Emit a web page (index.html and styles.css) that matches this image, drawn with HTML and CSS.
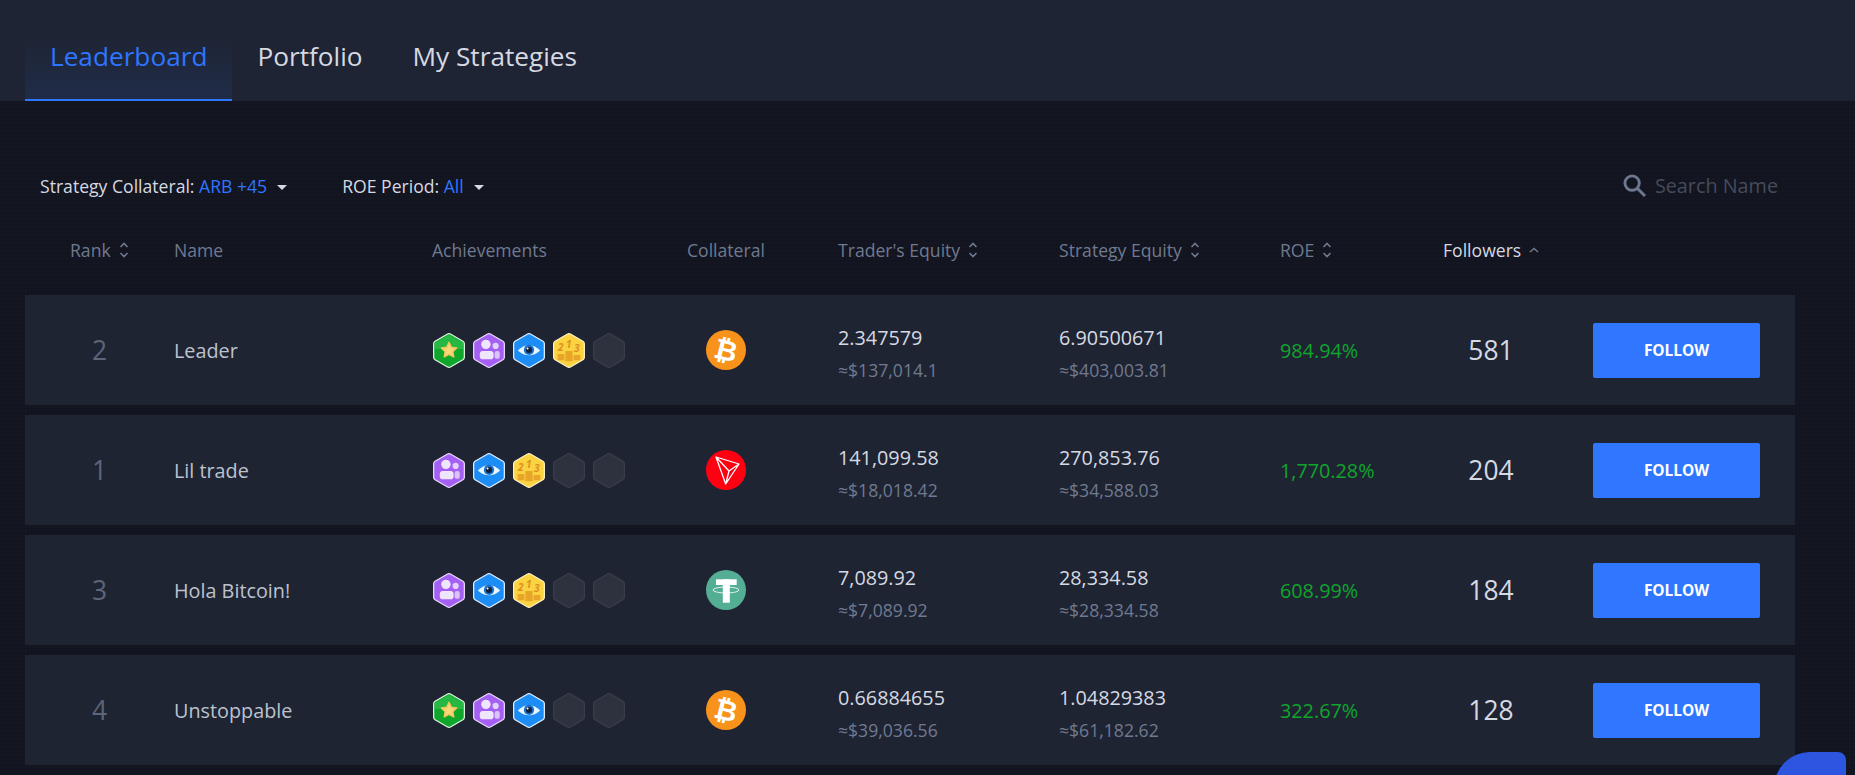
FILE: index.html
```html
<!DOCTYPE html>
<html lang="en">
<head>
<meta charset="utf-8">
<title>Leaderboard</title>
<link rel="stylesheet" href="styles.css">
</head>
<body>
<svg class="defs" width="0" height="0" aria-hidden="true">
  <symbol id="b-star" viewBox="0.4 0.4 31.2 34.2">
    <path fill="#0ea62b" stroke="#dff5e2" stroke-width="1.2" d="M14.6 1.4 Q16 .6 17.4 1.4 L29.6 8.4 Q31 9.2 31 10.8 V24.2 Q31 25.8 29.6 26.6 L17.4 33.6 Q16 34.4 14.6 33.6 L2.4 26.6 Q1 25.8 1 24.2 V10.8 Q1 9.2 2.4 8.4 Z"/>
    <path fill="#3cc457" opacity=".55" d="M16 2.2 L30 10 V16 H2 V10 Z"/>
    <path fill="#f7d77a" stroke="#f4c65a" stroke-width="1.4" stroke-linejoin="round" d="M16 9.5 L18.3 14.3 L23.5 15 L19.7 18.6 L20.7 23.8 L16 21.3 L11.3 23.8 L12.3 18.6 L8.5 15 L13.7 14.3 Z"/>
  </symbol>
  <symbol id="b-people" viewBox="0.4 0.4 31.2 34.2">
    <path fill="#a55ff2" stroke="#e9dcfd" stroke-width="1.2" d="M14.6 1.4 Q16 .6 17.4 1.4 L29.6 8.4 Q31 9.2 31 10.8 V24.2 Q31 25.8 29.6 26.6 L17.4 33.6 Q16 34.4 14.6 33.6 L2.4 26.6 Q1 25.8 1 24.2 V10.8 Q1 9.2 2.4 8.4 Z"/>
    <circle cx="13" cy="11.5" r="4.6" fill="#efe6fd"/>
    <circle cx="22.5" cy="13" r="3" fill="#e3d2fb"/>
    <rect x="7" y="18" width="13.5" height="8" rx="3" fill="#efe6fd"/>
    <rect x="21.5" y="18" width="5" height="7.5" rx="2" fill="#d9c3f9"/>
  </symbol>
  <symbol id="b-eye" viewBox="0.4 0.4 31.2 34.2">
    <path fill="#1d8df6" stroke="#e1f0ff" stroke-width="1.2" d="M14.6 1.4 Q16 .6 17.4 1.4 L29.6 8.4 Q31 9.2 31 10.8 V24.2 Q31 25.8 29.6 26.6 L17.4 33.6 Q16 34.4 14.6 33.6 L2.4 26.6 Q1 25.8 1 24.2 V10.8 Q1 9.2 2.4 8.4 Z"/>
    <path fill="#e9f5ff" d="M5 17.5 Q16 7 27 17.5 Q16 27 5 17.5 Z"/>
    <circle cx="16" cy="17" r="5" fill="#1b6fc9"/>
    <circle cx="16" cy="17" r="3" fill="#10203f"/>
    <circle cx="14.6" cy="15.6" r="1" fill="#fff"/>
  </symbol>
  <symbol id="b-podium" viewBox="0.4 0.4 31.2 34.2">
    <path fill="#fbd23f" stroke="#fff3c4" stroke-width="1.2" d="M14.6 1.4 Q16 .6 17.4 1.4 L29.6 8.4 Q31 9.2 31 10.8 V24.2 Q31 25.8 29.6 26.6 L17.4 33.6 Q16 34.4 14.6 33.6 L2.4 26.6 Q1 25.8 1 24.2 V10.8 Q1 9.2 2.4 8.4 Z"/>
    <path fill="#e9a52a" d="M5 21 H11.5 V27 H5 Z M12.5 18 H19.5 V28 H12.5 Z M20.5 22 H27 V27 H20.5 Z"/>
  </symbol>
  <symbol id="b-empty" viewBox="0.4 0.4 31.2 34.2">
    <path fill="#2e323f" stroke="#3a3e4b" stroke-width="1.2" d="M14.6 1.4 Q16 .6 17.4 1.4 L29.6 8.4 Q31 9.2 31 10.8 V24.2 Q31 25.8 29.6 26.6 L17.4 33.6 Q16 34.4 14.6 33.6 L2.4 26.6 Q1 25.8 1 24.2 V10.8 Q1 9.2 2.4 8.4 Z"/>
  </symbol>
  <symbol id="c-trx" viewBox="0 0 40 40">
    <circle cx="20" cy="20" r="20" fill="#ff0013"/>
    <path fill="none" stroke="#fff" stroke-width="1.3" stroke-linejoin="round" d="M10 7 L33 14 L19.7 34 Z M10 7 L23 21 L33 14 M23 21 L19.7 34"/>
  </symbol>
  <symbol id="c-usdt" viewBox="0 0 40 40">
    <circle cx="20" cy="20" r="20" fill="#53ae94"/>
    <rect x="10" y="9.3" width="20.7" height="5.7" fill="#fff"/>
    <rect x="16.8" y="9.3" width="7" height="23.4" fill="#fff"/>
    <ellipse cx="20" cy="20" rx="13" ry="3" fill="none" stroke="#fff" stroke-width=".8"/>
  </symbol>
  <symbol id="sort" viewBox="0 0 10 18">
    <path fill="none" stroke="currentColor" stroke-width="1.6" d="M1.5 6 L5 2.5 L8.5 6 M1.5 12 L5 15.5 L8.5 12"/>
  </symbol>
</svg>

<nav class="tabs">
  <a class="tab tab-active">Leaderboard</a>
  <a class="tab">Portfolio</a>
  <a class="tab">My Strategies</a>
</nav>

<main class="board">
  <div class="filters">
    <div class="filter filter-first">Strategy Collateral: <span class="accent">ARB +45</span><i class="caret"></i></div>
    <div class="filter">ROE Period: <span class="accent">All</span><i class="caret"></i></div>
    <div class="search">
      <svg class="search-icon" viewBox="0 0 24 24"><circle cx="9.5" cy="9.5" r="7.5" fill="none" stroke="currentColor" stroke-width="3"/><path d="M15 15 L23 23" stroke="currentColor" stroke-width="3"/></svg>
      <span>Search Name</span>
    </div>
  </div>

  <div class="cols head">
    <div class="head-rank">Rank <svg class="sort-icon"><use href="#sort"/></svg></div>
    <div>Name</div>
    <div>Achievements</div>
    <div>Collateral</div>
    <div>Trader's Equity <svg class="sort-icon"><use href="#sort"/></svg></div>
    <div>Strategy Equity <svg class="sort-icon"><use href="#sort"/></svg></div>
    <div>ROE <svg class="sort-icon"><use href="#sort"/></svg></div>
    <div class="head-active">Followers <svg class="up-icon" viewBox="0 0 10 6"><path fill="none" stroke="currentColor" stroke-width="1.5" d="M1 5 L5 1.5 L9 5"/></svg></div>
    <div></div>
  </div>

  <div class="cols row">
    <div class="rank">2</div>
    <div class="name">Leader</div>
    <div class="badges">
      <svg class="badge"><use href="#b-star"/></svg><svg class="badge"><use href="#b-people"/></svg><svg class="badge"><use href="#b-eye"/></svg>
      <svg class="badge" viewBox="0 0 32 35"><use href="#b-podium" width="32" height="35"/><text class="pod" x="5" y="18">2</text><text class="pod" x="13" y="15">1</text><text class="pod" x="21" y="19">3</text></svg>
      <svg class="badge"><use href="#b-empty"/></svg>
    </div>
    <div class="coin-cell"><svg class="coin" viewBox="0 0 40 40"><circle cx="20" cy="20" r="20" fill="#f7931a"/><text class="btc" x="20" y="30" transform="rotate(14 20 20)">₿</text></svg></div>
    <div class="val"><div>2.347579</div><div class="sub">≈$137,014.1</div></div>
    <div class="val"><div>6.90500671</div><div class="sub">≈$403,003.81</div></div>
    <div class="roe">984.94%</div>
    <div class="followers">581</div>
    <button class="follow">FOLLOW</button>
  </div>

  <div class="cols row">
    <div class="rank">1</div>
    <div class="name">Lil trade</div>
    <div class="badges">
      <svg class="badge"><use href="#b-people"/></svg><svg class="badge"><use href="#b-eye"/></svg>
      <svg class="badge" viewBox="0 0 32 35"><use href="#b-podium" width="32" height="35"/><text class="pod" x="5" y="18">2</text><text class="pod" x="13" y="15">1</text><text class="pod" x="21" y="19">3</text></svg>
      <svg class="badge"><use href="#b-empty"/></svg><svg class="badge"><use href="#b-empty"/></svg>
    </div>
    <div class="coin-cell"><svg class="coin"><use href="#c-trx"/></svg></div>
    <div class="val"><div>141,099.58</div><div class="sub">≈$18,018.42</div></div>
    <div class="val"><div>270,853.76</div><div class="sub">≈$34,588.03</div></div>
    <div class="roe">1,770.28%</div>
    <div class="followers">204</div>
    <button class="follow">FOLLOW</button>
  </div>

  <div class="cols row">
    <div class="rank">3</div>
    <div class="name">Hola Bitcoin!</div>
    <div class="badges">
      <svg class="badge"><use href="#b-people"/></svg><svg class="badge"><use href="#b-eye"/></svg>
      <svg class="badge" viewBox="0 0 32 35"><use href="#b-podium" width="32" height="35"/><text class="pod" x="5" y="18">2</text><text class="pod" x="13" y="15">1</text><text class="pod" x="21" y="19">3</text></svg>
      <svg class="badge"><use href="#b-empty"/></svg><svg class="badge"><use href="#b-empty"/></svg>
    </div>
    <div class="coin-cell"><svg class="coin"><use href="#c-usdt"/></svg></div>
    <div class="val"><div>7,089.92</div><div class="sub">≈$7,089.92</div></div>
    <div class="val"><div>28,334.58</div><div class="sub">≈$28,334.58</div></div>
    <div class="roe">608.99%</div>
    <div class="followers">184</div>
    <button class="follow">FOLLOW</button>
  </div>

  <div class="cols row">
    <div class="rank">4</div>
    <div class="name">Unstoppable</div>
    <div class="badges">
      <svg class="badge"><use href="#b-star"/></svg><svg class="badge"><use href="#b-people"/></svg><svg class="badge"><use href="#b-eye"/></svg><svg class="badge"><use href="#b-empty"/></svg><svg class="badge"><use href="#b-empty"/></svg>
    </div>
    <div class="coin-cell"><svg class="coin" viewBox="0 0 40 40"><circle cx="20" cy="20" r="20" fill="#f7931a"/><text class="btc" x="20" y="30" transform="rotate(14 20 20)">₿</text></svg></div>
    <div class="val"><div>0.66884655</div><div class="sub">≈$39,036.56</div></div>
    <div class="val"><div>1.04829383</div><div class="sub">≈$61,182.62</div></div>
    <div class="roe">322.67%</div>
    <div class="followers">128</div>
    <button class="follow">FOLLOW</button>
  </div>
</main>

<div class="chat-bubble"></div>
</body>
</html>
```

FILE: styles.css
```css
* { box-sizing: border-box; }

html, body {
  margin: 0;
  height: 775px;
  overflow: hidden;
}

body {
  background: #12141f;
  font-family: "Open Sans", "Noto Sans", sans-serif;
  font-size: 17.6px;
  color: #d5d9e2;
}

.defs { position: absolute; }

.tabs {
  display: flex;
  height: 101px;
  padding: 0 25px;
  background: #1e2434;
}

.tab {
  display: flex;
  align-items: center;
  padding: 11px 25px 0;
  font-size: 26.2px;
  color: #d5d9e2;
}

.tab-active {
  color: #2f75ff;
  box-shadow: inset 0 -2px 0 #2f75ff;
  background: linear-gradient(to bottom, rgba(47, 117, 255, 0) 35%, rgba(47, 117, 255, 0.1) 100%);
}

.board {
  height: 674px;
  padding: 63px 25px 0;
  background-color: #12141f;
  background-image: radial-gradient(rgba(255, 255, 255, 0.01) 0.7px, transparent 0.8px);
  background-size: 4px 4px;
}

.filters {
  display: flex;
  align-items: center;
  height: 44px;
  padding: 0 52px 0 15px;
}

.filter { display: flex; align-items: center; white-space: pre; }
.filter-first { margin-right: 55px; }

.accent { color: #2f75ff; }

.caret {
  width: 0;
  height: 0;
  margin-left: 10px;
  margin-top: 3px;
  border-left: 5px solid transparent;
  border-right: 5px solid transparent;
  border-top: 5px solid #d5d9e2;
}

.search {
  display: flex;
  align-items: center;
  gap: 9px;
  margin-left: auto;
  margin-top: -2px;
  font-size: 19.8px;
  color: #454b5c;
}

.search-icon { width: 23px; height: 23px; color: #6d7890; }

.cols {
  display: grid;
  grid-template-columns: 149px 258px 255px 151px 221px 221px 163px 150px 202px;
  align-items: center;
}

.head {
  height: 87px;
  padding-bottom: 3px;
  color: #6f7a90;
}

.head > div { display: flex; align-items: center; gap: 8px; }
.head-rank { padding-left: 45px; }
.head-active { color: #d5d9e2; }

.sort-icon { width: 10px; height: 18px; color: #6f7a90; }
.up-icon { width: 10px; height: 6px; color: #6f7a90; }

.row {
  width: 1770px;
  height: 110px;
  margin-bottom: 10px;
  background: #1f2433;
}

.rank { text-align: center; font-size: 26.4px; color: #5c6579; }
.name { font-size: 19.8px; color: #bcc2ce; }

.badges { display: flex; gap: 8px; align-items: center; padding-left: 1px; }
.badge { width: 32px; height: 35px; flex: none; }

.pod {
  font-family: "Open Sans", sans-serif;
  font-size: 10px;
  font-weight: 700;
  font-style: italic;
  fill: #e08f1f;
}

.coin-cell { width: 78px; display: flex; justify-content: center; }
.coin { width: 40px; height: 40px; }

.btc {
  font-family: "DejaVu Sans", sans-serif;
  font-size: 28px;
  font-weight: 700;
  text-anchor: middle;
  fill: #fff;
}

.val { padding-top: 8px; font-size: 19.8px; line-height: 33px; color: #d5d9e2; }
.sub { font-size: 17.6px; color: #6f7a90; }

.roe { font-size: 19.8px; color: #0fa52c; }

.followers { width: 96px; text-align: center; font-size: 26.4px; color: #d5d9e2; }

.follow {
  width: 167px;
  height: 55px;
  border: 0;
  border-radius: 2px;
  background: #3076ff;
  color: #fff;
  font-family: inherit;
  font-size: 15.4px;
  font-weight: 700;
}

.chat-bubble {
  position: fixed;
  left: 1774px;
  top: 752px;
  width: 72px;
  height: 60px;
  background: #2c55e0;
  border-radius: 36px 8px 0 0;
}
```
